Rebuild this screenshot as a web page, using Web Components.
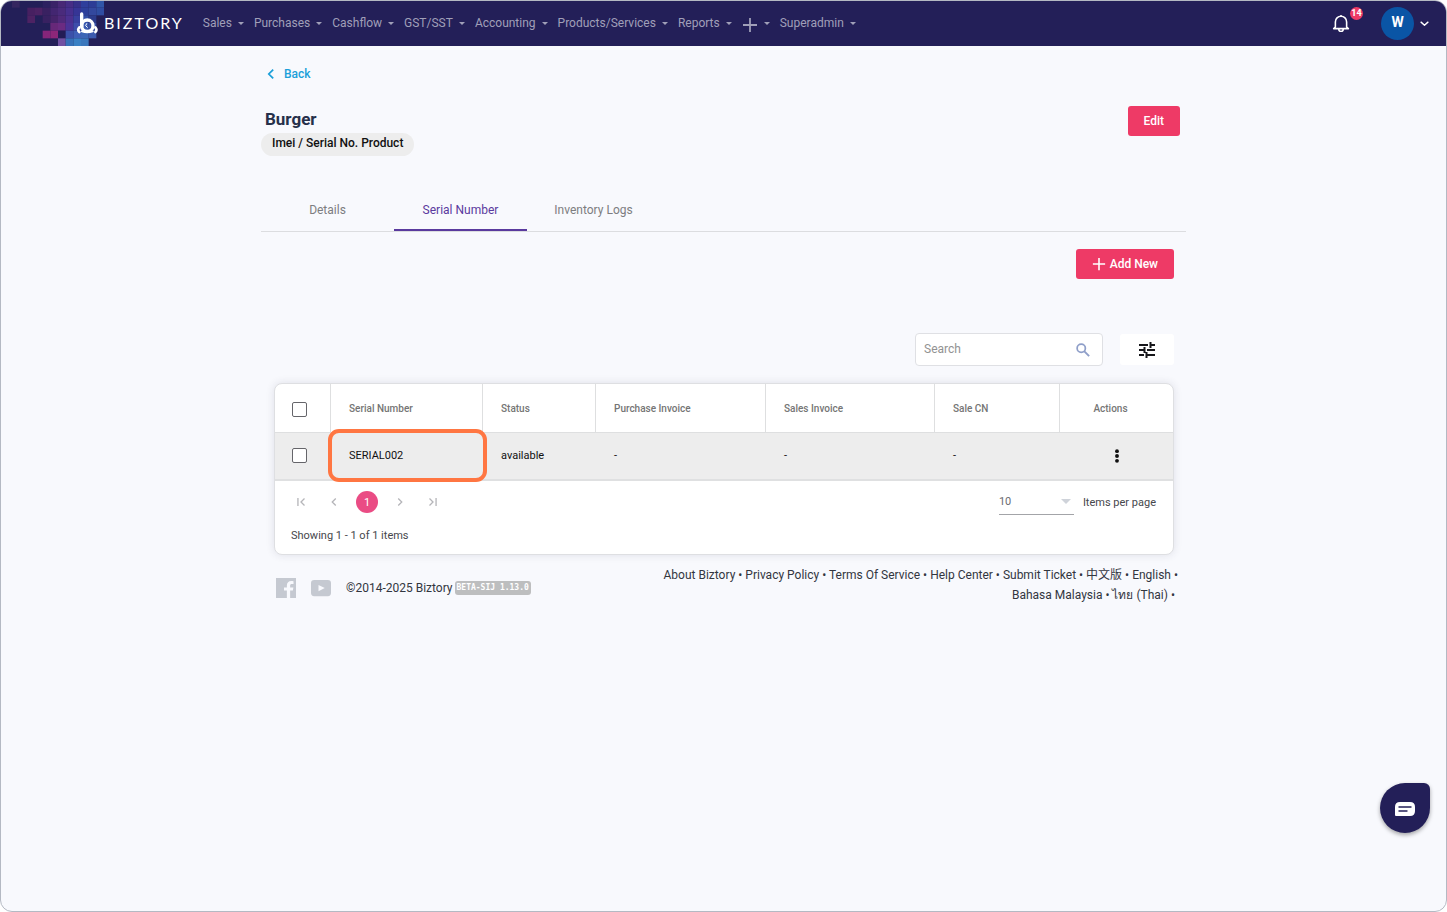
<!DOCTYPE html>
<html lang="en">
<head>
<meta charset="utf-8">
<meta name="viewport" content="width=device-width, initial-scale=1">
<title>Burger - Biztory</title>
<style>
  body {
    margin: 0;
    background: #ffffff;
    font-family: Roboto, "Noto Sans", "Noto Sans CJK SC", sans-serif;
    font-size: 12px;
    color: #32363f;
  }
</style>
</head>
<body>
<biz-app>
  <biz-navbar slot="top">
    <biz-menu>Sales</biz-menu>
    <biz-menu>Purchases</biz-menu>
    <biz-menu>Cashflow</biz-menu>
    <biz-menu>GST/SST</biz-menu>
    <biz-menu>Accounting</biz-menu>
    <biz-menu>Products/Services</biz-menu>
    <biz-menu>Reports</biz-menu>
    <biz-menu data-label="Create new"><biz-icon data-name="plus" data-size="16"></biz-icon></biz-menu>
    <biz-menu>Superadmin</biz-menu>
    <biz-account slot="account" data-count="14" data-initial="W"></biz-account>
  </biz-navbar>

  <biz-product-head data-title="Burger" data-type="Imei / Serial No. Product">
    <biz-button slot="action">Edit</biz-button>
  </biz-product-head>
  <biz-tabs data-tabs="Details,Serial Number,Inventory Logs" data-active="1"></biz-tabs>
  <biz-toolbar>
    <biz-button><biz-icon data-name="plus" data-size="14"></biz-icon>Add New</biz-button>
  </biz-toolbar>
  <biz-card>
    <biz-serial-table></biz-serial-table>
    <biz-pager></biz-pager>
  </biz-card>
  <biz-footer></biz-footer>

  <biz-chat slot="chat"></biz-chat>
</biz-app>

<script>
const icons = {
  plus: `<path d="M8 1v14M1 8h14" fill="none" stroke="currentColor" stroke-width="1.8"/>`,
  back: `<path d="M10.500 3 5.500 8l5 5" fill="none" stroke="currentColor" stroke-width="2"/>`,
  down: `<path d="M3 6l5 4.500L13 6" fill="none" stroke="currentColor" stroke-width="2" stroke-linecap="round" stroke-linejoin="round"/>`,
  prev: `<path d="M10 4 6 8l4 4" fill="none" stroke="currentColor" stroke-width="1.5"/>`,
  next: `<path d="M6 4l4 4-4 4" fill="none" stroke="currentColor" stroke-width="1.5"/>`,
  first: `<path d="M12 4 8 8l4 4M4.500 3.500v9" fill="none" stroke="currentColor" stroke-width="1.500"/>`,
  last: `<path d="M4 4l4 4-4 4M11.500 3.500v9" fill="none" stroke="currentColor" stroke-width="1.500"/>`,
  search: `<circle cx="6" cy="6" r="4.700" fill="none" stroke="currentColor" stroke-width="2"/><path d="M9.300 9.300 15 15" stroke="currentColor" stroke-width="2.200"/>`,
  tune: `<path d="M0 3h9M11 3h5M11.500 0v6M0 8h5M5.500 5v6M8 8h8M0 13h5M7 13h9M7.500 10v6" fill="none" stroke="currentColor" stroke-width="2"/>`,
  dots: `<circle cx="8" cy="2.500" r="2.200"/><circle cx="8" cy="8" r="2.200"/><circle cx="8" cy="13.500" r="2.200"/>`,
  bell: `<path d="M3 11.500V7a5 5 0 0 1 10 0v4.500l1.500 1.500h-13zM8 2V.8M6 13.500a2 2 0 0 0 4 0" fill="none" stroke="currentColor" stroke-width="1.400" stroke-linejoin="round"/>`,
  facebook: `<path fill-rule="evenodd" d="M0 0h16v16h-4.700V9.900h2.200l.4-2.400h-2.600V6c0-.8.4-1.300 1.300-1.300H14V2.500c-.6-.1-1.200-.1-1.800-.1-2.100 0-3.500 1.300-3.500 3.500v1.600H6.400v2.400h2.300V16H0z"/>`,
  youtube: `<path fill-rule="evenodd" d="M2.500 1.500h11Q16 1.500 16 4v8q0 2.500-2.500 2.500h-11Q0 14.500 0 12V4q0-2.500 2.500-2.500zM6 5.500v5l5-2.500z"/>`
};

class BaseElement extends HTMLElement {
  constructor() {
    super();
    this.dom = this.attachShadow({ mode: "open" });
  }

  connectedCallback() {
    const template = document.createElement("template");
    template.innerHTML = `<style>* { box-sizing: border-box; } button, input, select { font: inherit; }${this.css()}</style>${this.markup()}`;
    this.dom.replaceChildren(document.importNode(template.content, true));
  }
}

class Icon extends BaseElement {
  css() {
    const size = this.dataset.size || 16;
    return `
      :host { display: inline-block; flex: none; width: ${size}px; height: ${size}px; }
      svg { display: block; width: 100%; height: 100%; fill: currentColor; }
    `;
  }

  markup() {
    return `<svg viewBox="0 0 16 16" aria-hidden="true">${icons[this.dataset.name]}</svg>`;
  }
}

class App extends BaseElement {
  css() {
    return `
      :host {
        display: block;
        box-sizing: border-box;
        min-height: 100vh;
        border: 1px solid #b4b9c3;
        border-radius: 12px;
        overflow: hidden;
        background: #f8f9fd;
      }
      main { max-width: 925px; margin: 0 auto; }
    `;
  }

  markup() {
    return `<slot name="top"></slot><main><slot></slot></main><slot name="chat"></slot>`;
  }
}

// Rows of the pixel mosaic behind the logo, one colour per cell
const mosaic = [
  ["#35265f", "", "", "", "#2c2160", "#3a2368", "#482876", "#462d86", "#363089", "#2e3e9c", "#2c3c96", "#3056a8"],
  ["", "", "#472061", "#4c2264", "#392161", "#432671", "#4a2b7c", "#47308e", "#363596", "#2d3f9b", "#33489e", "#2f4da2"],
  ["", "", "#4d2263", "", "#382161", "#46246b", "#502a7b", "#4c3190", "#38409f", "#334fa7", "#2c3c8c", ""],
  ["", "", "", "", "", "#672879", "#6b2b82", "#4b3398", "#3e4dab", "#3c5cb2", "#3953a8", ""],
  ["", "", "", "", "#86257a", "#8d2779", "#231c56", "#3b51aa", "#3f60b7", "#3c66b6", "#3c5aae", ""],
  ["", "", "", "", "", "", "#7050a2", "#3670b8", "#3a80c4", "#3a77bd", "", ""]
];

class Logo extends BaseElement {
  css() {
    return `
      :host { display: block; flex: none; }
      a { display: flex; align-items: center; color: #ffffff; text-decoration: none; }
      svg { display: block; width: 103px; height: 45px; }
      span { padding-bottom: 2px; font: 16px/20px Lato, sans-serif; letter-spacing: 2px; }
    `;
  }

  markup() {
    const cells = mosaic.map((row, y) => row.map((fill, x) =>
      fill ? `<rect x="${33 + x * 23}" y="${y * 23 - 3}" width="23" height="23" fill="${fill}"/>` : ""
    ).join("")).join("");
    return `<a href="#" aria-label="Biztory">
      <svg viewBox="0 0 309 135" aria-hidden="true">
        ${cells}
        <g fill="none" stroke="#fff" stroke-linecap="round">
          <path d="M242 39v37" stroke-width="10"/>
          <circle cx="259" cy="74" r="17" stroke-width="10"/>
          <path d="M235 79q-7 8 0 14M283 79q7 8 0 14" stroke-width="8"/>
          <path d="M243 91q16 6 32 0" stroke-width="6"/>
          <path d="M257 68l-3 6 5 5" stroke-width="3"/>
        </g>
      </svg>
      <span>BIZTORY</span>
    </a>`;
  }
}

class Navbar extends BaseElement {
  css() {
    return `
      :host { display: block; background: #231f58; color: #a09fb8; }
      header { display: flex; align-items: center; height: 45px; padding-right: 16px; }
      nav { display: flex; align-items: center; gap: 10px; margin-left: 19px; padding-bottom: 2px; flex: 1; }
    `;
  }

  markup() {
    return `<header><biz-logo></biz-logo><nav><slot></slot></nav><slot name="account"></slot></header>`;
  }
}

class Menu extends BaseElement {
  css() {
    return `
      button {
        display: flex;
        align-items: center;
        gap: 6px;
        padding: 0;
        border: 0;
        background: none;
        color: inherit;
        line-height: 20px;
        white-space: nowrap;
        cursor: pointer;
      }
      button:hover { color: #ffffff; }
      button::after {
        content: "";
        margin-top: 2px;
        border: 3px solid transparent;
        border-top-color: currentColor;
        border-bottom: 0;
      }
      ::slotted(biz-icon) { margin-top: 4px; }
    `;
  }

  markup() {
    const label = this.dataset.label ? `aria-label="${this.dataset.label}"` : "";
    return `<button type="button" aria-haspopup="true" ${label}><slot></slot></button>`;
  }
}

class Account extends BaseElement {
  css() {
    return `
      :host { display: flex; align-items: center; gap: 31px; color: #ffffff; }
      button { display: flex; align-items: center; padding: 0; border: 0; background: none; color: inherit; cursor: pointer; }
      .bell { position: relative; padding-bottom: 2px; }
      .count {
        position: absolute;
        left: 18px;
        top: -7px;
        min-width: 13px;
        height: 13px;
        border-radius: 7px;
        background: #ee3a66;
        font: bold 9px/13px Roboto, sans-serif;
        text-align: center;
      }
      .user { gap: 5px; }
      .avatar {
        width: 33px;
        height: 33px;
        border-radius: 50%;
        background: #0a55a5;
        font: bold 14px/30px Roboto, sans-serif;
      }
    `;
  }

  markup() {
    return `
      <button class="bell" type="button" aria-label="Notifications">
        <biz-icon data-name="bell" data-size="18"></biz-icon>
        <span class="count">${this.dataset.count}</span>
      </button>
      <button class="user" type="button">
        <span class="avatar">${this.dataset.initial}</span>
        <biz-icon data-name="down" data-size="11"></biz-icon>
      </button>
    `;
  }
}

class Button extends BaseElement {
  css() {
    return `
      button {
        display: flex;
        align-items: center;
        gap: 4px;
        height: 30px;
        padding: 0 16px;
        border: 0;
        border-radius: 3px;
        background: #ee3a66;
        color: #ffffff;
        font-weight: 500;
        cursor: pointer;
      }
      button:hover { background: #d92e58; }
    `;
  }

  markup() {
    return `<button type="button"><slot></slot></button>`;
  }
}

class ProductHead extends BaseElement {
  css() {
    return `
      :host { display: block; padding: 18px 6px 33px 0; }
      a {
        display: inline-flex;
        align-items: center;
        gap: 6px;
        padding-left: 3px;
        color: #1b9fd9;
        font-weight: 500;
        line-height: 20px;
        text-decoration: none;
      }
      .row { display: flex; justify-content: space-between; align-items: flex-start; margin-top: 22px; }
      h1 { margin: 0; padding-left: 4px; font-size: 17px; line-height: 27px; font-weight: 700; color: #26304a; }
      .type {
        display: inline-block;
        padding: 0 11px 3px;
        border-radius: 12px;
        background: #ededed;
        color: #111111;
        font-weight: 500;
        line-height: 20px;
      }
    `;
  }

  markup() {
    return `
      <a href="#"><biz-icon data-name="back" data-size="14"></biz-icon>Back</a>
      <div class="row">
        <div>
          <h1>${this.dataset.title}</h1>
          <span class="type">${this.dataset.type}</span>
        </div>
        <slot name="action"></slot>
      </div>
    `;
  }
}

class Tabs extends BaseElement {
  css() {
    return `
      :host { display: flex; border-bottom: 1px solid #dcdde0; }
      button {
        min-width: 133px;
        height: 42px;
        padding: 2px 16px 0;
        border: 0;
        border-bottom: 2px solid transparent;
        background: none;
        color: #7d7d80;
        cursor: pointer;
      }
      button[aria-selected="true"] { border-color: #5a3a9e; color: #5a3a9e; }
    `;
  }

  markup() {
    return this.dataset.tabs.split(",").map((name, i) =>
      `<button type="button" role="tab" aria-selected="${i === Number(this.dataset.active)}">${name}</button>`
    ).join("");
  }

  connectedCallback() {
    super.connectedCallback();
    this.setAttribute("role", "tablist");
    const tabs = [...this.dom.querySelectorAll("button")];
    tabs.forEach(tab => tab.addEventListener("click", () => {
      tabs.forEach(t => t.setAttribute("aria-selected", t === tab));
    }));
  }
}

class Toolbar extends BaseElement {
  css() {
    return `
      :host { display: flex; flex-direction: column; align-items: flex-end; gap: 54px; padding: 17px 12px 17px 0; }
      .tools { display: flex; align-items: center; gap: 17px; }
      .search {
        display: flex;
        align-items: center;
        width: 188px;
        height: 33px;
        padding: 0 12px 0 8px;
        border: 1px solid #dfe0e4;
        border-radius: 4px;
        background: #ffffff;
        color: #8f9fc9;
      }
      input { flex: 1; min-width: 0; padding: 0 0 2px; border: 0; outline: 0; background: none; color: #32363f; }
      input::placeholder { color: #929292; opacity: 1; }
      .filter {
        display: flex;
        align-items: center;
        justify-content: center;
        width: 54px;
        height: 31px;
        padding: 0;
        border: 0;
        border-radius: 3px;
        background: #ffffff;
        color: #17171b;
        cursor: pointer;
      }
    `;
  }

  markup() {
    return `
      <slot></slot>
      <div class="tools">
        <label class="search">
          <input type="text" placeholder="Search" aria-label="Search">
          <biz-icon data-name="search" data-size="14"></biz-icon>
        </label>
        <button class="filter" type="button" aria-label="Filter columns"><biz-icon data-name="tune"></biz-icon></button>
      </div>
    `;
  }
}

class Card extends BaseElement {
  css() {
    return `
      :host {
        display: block;
        margin: 0 12px 0 13px;
        border: 1px solid #dedfe2;
        border-radius: 8px;
        background: #ffffff;
        box-shadow: 0 0 8px rgba(40, 45, 70, 0.12);
      }
    `;
  }

  markup() {
    return `<slot></slot>`;
  }
}

const columns = [
  ["Serial Number", 152],
  ["Status", 113],
  ["Purchase Invoice", 170],
  ["Sales Invoice", 169],
  ["Sale CN", 125]
];
const rows = [["SERIAL002", "available", "-", "-", "-"]];

class SerialTable extends BaseElement {
  css() {
    return `
      :host { display: block; }
      table { width: 100%; table-layout: fixed; border-collapse: separate; border-spacing: 0; }
      th, td { padding: 0 18px; text-align: left; }
      th {
        height: 49px;
        border-right: 1px solid #dedfe0;
        border-bottom: 1px solid #dedfe0;
        color: #757575;
        font-size: 10px;
        font-weight: 500;
      }
      th:last-child { border-right: 0; text-align: center; padding: 0 12px 0 0; }
      td {
        position: relative;
        height: 48px;
        padding-bottom: 2px;
        border-bottom: 2px solid #dfe0e1;
        background: #ededed;
        color: #111111;
        font-size: 11px;
      }
      th:first-child { padding: 2px 0 0 17px; }
      td:first-child { padding: 0 0 2px 17px; }
      td:last-child { padding: 0; }
      input {
        appearance: none;
        display: block;
        width: 15px;
        height: 15px;
        margin: 0;
        border: 1px solid #65656a;
        border-radius: 2px;
        background: #ffffff;
      }
      input:checked { background: #5a3a9e; }
      button { display: flex; margin: 0 auto; padding: 0; border: 0; background: none; color: #111111; cursor: pointer; }
      .marked { z-index: 1; }
      .marked::after {
        content: "";
        position: absolute;
        inset: -4px -4px -3px -3px;
        border: 4px solid #ff7642;
        border-radius: 11px;
        pointer-events: none;
      }
    `;
  }

  markup() {
    return `<table>
      <colgroup><col style="width: 56px">${columns.map(c => `<col style="width: ${c[1]}px">`).join("")}<col></colgroup>
      <thead><tr>
        <th><input type="checkbox" aria-label="Select all"></th>
        ${columns.map(c => `<th scope="col">${c[0]}</th>`).join("")}
        <th scope="col">Actions</th>
      </tr></thead>
      <tbody>${rows.map(row => `<tr>
        <td><input type="checkbox" aria-label="Select ${row[0]}"></td>
        ${row.map((cell, i) => `<td${i ? "" : ` class="marked"`}>${cell}</td>`).join("")}
        <td><button type="button" aria-label="Row actions"><biz-icon data-name="dots" data-size="14"></biz-icon></button></td>
      </tr>`).join("")}</tbody>
    </table>`;
  }
}

class Pager extends BaseElement {
  css() {
    return `
      :host { display: block; padding: 8px 17px 8px 15px; font-size: 11px; color: #46474c; }
      .row { display: flex; align-items: center; justify-content: space-between; }
      .pages { display: flex; align-items: center; gap: 11px; }
      button {
        display: flex;
        align-items: center;
        justify-content: center;
        width: 22px;
        height: 22px;
        padding: 0;
        border: 0;
        border-radius: 50%;
        background: none;
        color: #b5b5b9;
      }
      [aria-current] { background: #ea4c84; color: #ffffff; }
      .size { display: flex; align-items: center; gap: 9px; }
      .select { position: relative; }
      select {
        appearance: none;
        display: block;
        width: 75px;
        height: 26px;
        padding: 0;
        border: 0;
        border-bottom: 1px solid #a3a4a8;
        border-radius: 0;
        background: none;
        color: #6b6c70;
      }
      .select::after {
        content: "";
        position: absolute;
        right: 3px;
        top: 10px;
        border: 5px solid transparent;
        border-top-color: #cfd3da;
        border-bottom: 0;
        pointer-events: none;
      }
      p { margin: 11px 0 0; padding-left: 1px; line-height: 20px; }
    `;
  }

  markup() {
    return `
      <div class="row">
        <div class="pages">
          <button type="button" aria-label="First page"><biz-icon data-name="first" data-size="14"></biz-icon></button>
          <button type="button" aria-label="Previous page"><biz-icon data-name="prev" data-size="14"></biz-icon></button>
          <button type="button" aria-current="page">1</button>
          <button type="button" aria-label="Next page"><biz-icon data-name="next" data-size="14"></biz-icon></button>
          <button type="button" aria-label="Last page"><biz-icon data-name="last" data-size="14"></biz-icon></button>
        </div>
        <div class="size">
          <span class="select">
            <select id="size"><option>10</option><option>25</option><option>50</option></select>
          </span>
          <label for="size">Items per page</label>
        </div>
      </div>
      <p>Showing 1 - 1 of 1 items</p>
    `;
  }
}

const footerLinks = [
  ["About Biztory", "Privacy Policy", "Terms Of Service", "Help Center", "Submit Ticket", "中文版", "English"],
  ["Bahasa Malaysia", "ไทย (Thai)"]
];

class Footer extends BaseElement {
  css() {
    return `
      :host { display: flex; justify-content: space-between; padding: 10px 8px 10px 15px; }
      .brand { display: flex; align-items: center; height: 46px; }
      .brand a { display: flex; margin-right: 15px; color: #c5c9d1; }
      .version {
        margin-left: 2px;
        padding: 0 2px;
        border-radius: 3px;
        background: #bdbebf;
        color: #ffffff;
        font: bold 8px/14px "DejaVu Sans Mono", monospace;
      }
      .links { text-align: right; line-height: 20px; white-space: nowrap; }
      .links a { color: inherit; text-decoration: none; }
      .links div + div { padding-right: 3px; }
    `;
  }

  markup() {
    return `
      <div class="brand">
        <a href="#" aria-label="Facebook"><biz-icon data-name="facebook" data-size="20"></biz-icon></a>
        <a href="#" aria-label="YouTube"><biz-icon data-name="youtube" data-size="20"></biz-icon></a>
        <span>©2014-2025 Biztory</span>
        <span class="version">BETA-SIJ 1.13.0</span>
      </div>
      <div class="links">
        ${footerLinks.map(line => `<div>${line.map(text => `<a href="#">${text}</a> •`).join(" ")}</div>`).join("")}
      </div>
    `;
  }
}

class Chat extends BaseElement {
  css() {
    return `
      :host { position: fixed; right: 17px; bottom: 79px; }
      button {
        display: flex;
        align-items: center;
        justify-content: center;
        width: 50px;
        height: 50px;
        padding: 2px 0 0;
        border: 0;
        border-radius: 50% 6px 50% 50%;
        background: #231f58;
        box-shadow: 0 2px 4px rgba(0, 0, 0, 0.35);
        cursor: pointer;
      }
      svg { width: 20px; height: 16px; }
    `;
  }

  markup() {
    return `<button type="button" aria-label="Open chat">
      <svg viewBox="0 0 20 16" aria-hidden="true">
        <path d="M5 1h10q5 0 5 5v4q0 5-5 5H1q-1 0-1-1V6q0-5 5-5z" fill="#fff"/>
        <path d="M4 6h12M4 10h8" stroke="#231f58" stroke-width="1.400" stroke-linecap="round"/>
      </svg>
    </button>`;
  }
}

const tags = {
  "biz-icon": Icon,
  "biz-logo": Logo,
  "biz-menu": Menu,
  "biz-account": Account,
  "biz-navbar": Navbar,
  "biz-button": Button,
  "biz-product-head": ProductHead,
  "biz-tabs": Tabs,
  "biz-toolbar": Toolbar,
  "biz-card": Card,
  "biz-serial-table": SerialTable,
  "biz-pager": Pager,
  "biz-footer": Footer,
  "biz-chat": Chat,
  "biz-app": App
};

Object.keys(tags).forEach(tag => {
  if (window.customElements.get(tag) === undefined) {
    window.customElements.define(tag, tags[tag]);
  }
});
</script>
</body>
</html>
